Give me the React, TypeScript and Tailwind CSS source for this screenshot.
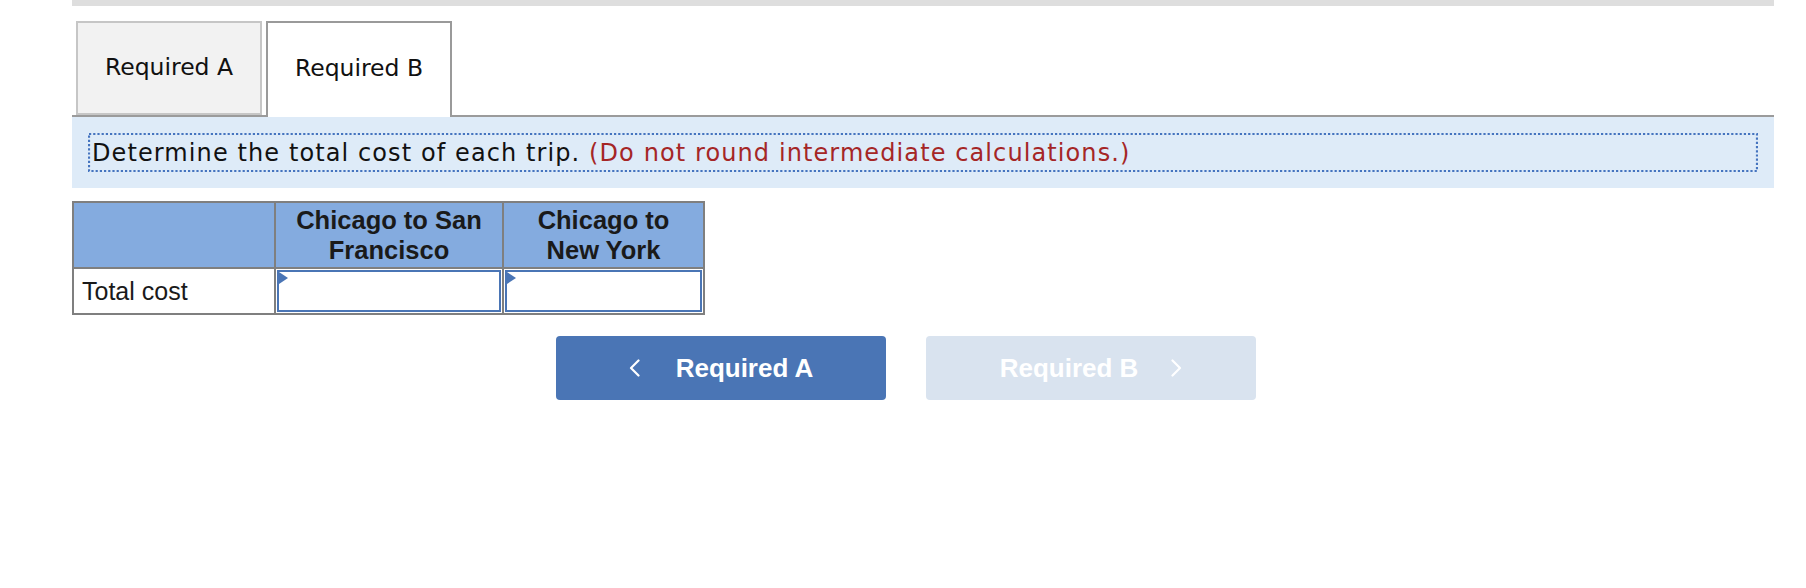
import React from "react";

const verdana = { fontFamily: '"DejaVu Sans", Verdana, sans-serif' };

function Chevron({ dir }: { dir: "left" | "right" }) {
  return (
    <svg width="11" height="18" viewBox="0 0 11 18" fill="none" className="shrink-0">
      {dir === "left" ? (
        <polyline points="9.5,1.5 2,9 9.5,16.5" stroke="white" strokeWidth="2.2" strokeLinecap="round" strokeLinejoin="round" />
      ) : (
        <polyline points="1.5,1.5 9,9 1.5,16.5" stroke="white" strokeWidth="2.2" strokeLinecap="round" strokeLinejoin="round" />
      )}
    </svg>
  );
}

function InputCell() {
  return (
    <div className="h-full p-[1px]">
      <div className="relative h-full border-2 border-[#4a75b5] bg-white">
        <svg width="10" height="12" viewBox="0 0 10 12" className="absolute left-0 top-0">
          <polygon points="0,0 9,6 0,12" fill="#4a75b5" />
        </svg>
      </div>
    </div>
  );
}

export default function App() {
  return (
    <div className="w-[1806px] h-[588px] bg-white text-black">
      <div className="ml-[72px] w-[1702px]">
        <div className="h-[6px] bg-[#dedede]" />
        <div className="flex items-start gap-[4px] pl-[4px] pt-[15px]">
          <div
            className="w-[186px] h-[94px] border-2 border-[#c6c6c6] bg-[#f2f2f2] flex items-center justify-center text-[23.5px] text-[#111]"
            style={verdana}
          >
            Required A
          </div>
          <div
            className="relative z-10 -mb-[2px] w-[186px] h-[96px] border-2 border-b-0 border-[#9a9a9a] bg-white flex items-center justify-center pb-[2px] text-[23.5px] text-[#111]"
            style={verdana}
          >
            Required B
          </div>
        </div>
        <div className="border-t-2 border-[#9b9b9b] bg-[#deebf8] p-[16px]">
          <div
            className="relative h-[39px] flex items-center pl-[4px] text-[24px] tracking-[1.1px] text-[#111] whitespace-nowrap"
            style={verdana}
          >
            <svg className="absolute inset-0 pointer-events-none" width="100%" height="100%">
              <rect
                x="1"
                y="1"
                width="calc(100% - 2px)"
                height="37"
                fill="none"
                stroke="#4574bf"
                strokeWidth="2.2"
                strokeDasharray="2.2 2"
              />
            </svg>
            <span className="relative">
              Determine the total cost of each trip.{" "}
              <span className="text-[#a52626]">(Do not round intermediate calculations.)</span>
            </span>
          </div>
        </div>

        <div
          className="mt-[13px] w-[633px] border-2 border-[#7f7f7f]"
          style={{ fontFamily: '"Liberation Sans", Arial, sans-serif' }}
        >
          <div className="flex h-[66px] bg-[#84abdf] border-b-2 border-[#7f7f7f]">
            <div className="w-[202px] border-r-2 border-[#7f7f7f]" />
            <div className="w-[228px] border-r-2 border-[#7f7f7f] flex items-center justify-center text-center font-bold text-[25.5px] leading-[30px] text-[#1a1a1a]">
              Chicago to San
              <br />
              Francisco
            </div>
            <div className="flex-1 flex items-center justify-center text-center font-bold text-[25.5px] leading-[30px] text-[#1a1a1a]">
              Chicago to
              <br />
              New York
            </div>
          </div>
          <div className="flex h-[44px] bg-white">
            <div className="w-[202px] border-r-2 border-[#7f7f7f] flex items-center pl-[8px] pt-[2px] text-[25px] text-[#1a1a1a]">
              Total cost
            </div>
            <div className="w-[228px] border-r-2 border-[#7f7f7f]">
              <InputCell />
            </div>
            <div className="flex-1">
              <InputCell />
            </div>
          </div>
        </div>

        <div
          className="mt-[21px] ml-[484px] flex gap-[40px]"
          style={{ fontFamily: '"Liberation Sans", Arial, sans-serif' }}
        >
          <div className="w-[330px] h-[64px] rounded-[4px] bg-[#4a75b5] flex items-center justify-center gap-[36px] text-white font-bold text-[26px]">
            <Chevron dir="left" />
            <span>Required A</span>
          </div>
          <div className="w-[330px] h-[64px] rounded-[4px] bg-[#d9e3ef] flex items-center justify-center gap-[33px] text-white font-bold text-[26px]">
            <span>Required B</span>
            <Chevron dir="right" />
          </div>
        </div>
      </div>
    </div>
  );
}
